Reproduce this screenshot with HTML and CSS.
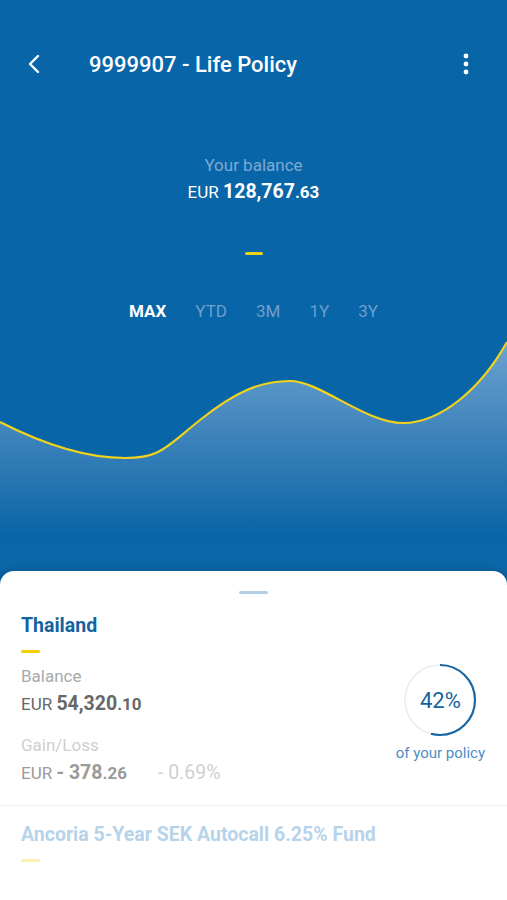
FILE: index.html
```html
<!DOCTYPE html>
<html>
<head>
<meta charset="utf-8">
<link rel="stylesheet" href="styles.css">
</head>
<body>
<div class="screen">
  <header class="topbar">
    <svg class="back" width="16" height="22" viewBox="0 0 16 22"><path d="M12 3 L4 11 L12 19" fill="none" stroke="#fff" stroke-width="2.4" stroke-linecap="round" stroke-linejoin="round"/></svg>
    <h1 class="title">9999907 - Life Policy</h1>
    <svg class="kebab" width="6" height="22" viewBox="0 0 6 22"><circle cx="3" cy="3" r="2.4" fill="#fff"/><circle cx="3" cy="11" r="2.4" fill="#fff"/><circle cx="3" cy="19" r="2.4" fill="#fff"/></svg>
  </header>
  <section class="balance">
    <div class="balance-label">Your balance</div>
    <div class="balance-amount"><span class="cur">EUR</span> <b>128,767</b><span class="dec">.63</span></div>
    <div class="dash"></div>
  </section>
  <nav class="tabs">
    <span class="tab active">MAX</span>
    <span class="tab">YTD</span>
    <span class="tab">3M</span>
    <span class="tab">1Y</span>
    <span class="tab">3Y</span>
  </nav>
  <svg class="chart" width="507" height="241" viewBox="0 0 507 241" preserveAspectRatio="none">
    <defs>
      <linearGradient id="fill" x1="0" y1="0" x2="0" y2="1">
        <stop offset="0" stop-color="#6aa3cf"/>
        <stop offset="0.3" stop-color="#4a8bc0"/>
        <stop offset="0.85" stop-color="#0a64a6"/>
        <stop offset="1" stop-color="#0d68a9"/>
      </linearGradient>
    </defs>
    <path d="M0,92 C45,115 85,128 125,128 C160,128 165,118 200,90 C235,62 260,51 290,51 C320,51 365,93 403,93 C440,93 480,60 507,12 L507,241 L0,241 Z" fill="url(#fill)"/>
    <path d="M0,92 C45,115 85,128 125,128 C160,128 165,118 200,90 C235,62 260,51 290,51 C320,51 365,93 403,93 C440,93 480,60 507,12" fill="none" stroke="#f2d31b" stroke-width="2.2"/>
  </svg>
  <main class="card">
    <div class="handle"></div>
    <div class="fund">
      <h2 class="fund-name">Thailand</h2>
      <div class="ybar"></div>
      <div class="fund-body">
        <div class="figures">
          <div class="label">Balance</div>
          <div class="value"><span class="cur">EUR</span> <b>54,320</b><span class="dec">.10</span></div>
          <div class="label light">Gain/Loss</div>
          <div class="value soft"><span class="cur">EUR</span> <b>- 378</b><span class="dec">.26</span><span class="pct">- 0.69%</span></div>
        </div>
        <div class="share">
          <div class="ring">
            <svg width="74" height="74" viewBox="0 0 74 74">
              <circle cx="37" cy="37" r="35" fill="none" stroke="#ececec" stroke-width="1.6"/>
              <circle cx="37" cy="37" r="35" fill="none" stroke="#1766a6" stroke-width="2.2" stroke-dasharray="119 220" transform="rotate(-90 37 37)"/>
            </svg>
            <span class="ring-text">42%</span>
          </div>
          <div class="share-label">of your policy</div>
        </div>
      </div>
    </div>
    <div class="fund next">
      <h2 class="fund-name">Ancoria 5-Year SEK Autocall 6.25% Fund</h2>
      <div class="ybar"></div>
    </div>
  </main>
</div>
</body>
</html>
```
FILE: styles.css
```css
* { box-sizing: border-box; }
html, body { margin: 0; padding: 0; }
body {
  font-family: Roboto, "Noto Sans", sans-serif;
  background: #0865a7;
  width: 507px;
  height: 900px;
  overflow: hidden;
}
.screen {
  display: flex;
  flex-direction: column;
  height: 900px;
}
.topbar {
  height: 128px;
  display: flex;
  align-items: center;
  padding: 0 38px 0 26px;
  color: #fff;
}
.back { display: block; }
.title {
  flex: 1;
  margin: 0 0 0 47px;
  font-size: 22px;
  font-weight: 500;
}
.kebab { display: block; }
.balance {
  display: flex;
  flex-direction: column;
  align-items: center;
  padding-top: 27px;
}
.balance-label {
  color: #7eaad4;
  font-size: 17px;
  line-height: 20px;
}
.balance-amount {
  margin-top: 7px;
  color: #fff;
  font-size: 17px;
  line-height: 20px;
}
.balance-amount b { font-size: 19.5px; font-weight: 700; }
.balance-amount .dec { font-weight: 700; font-size: 17px; }
.dash {
  margin-top: 50px;
  width: 18px;
  height: 3px;
  border-radius: 2px;
  background: #f2d31b;
}
.tabs {
  display: flex;
  justify-content: center;
  margin-top: 45px;
  height: 22px;
  align-items: center;
  font-size: 17px;
  color: #6f9fcf;
}
.tab { margin: 0 14.5px; }
.tab.active { color: #fff; font-weight: 700; }
.chart { display: block; margin-top: 8px; flex: none; }
.card {
  flex: 1;
  background: #fff;
  border-radius: 14px 14px 0 0;
  box-shadow: 0 -2px 6px rgba(0, 40, 80, 0.25);
  display: flex;
  flex-direction: column;
}
.handle {
  align-self: center;
  margin-top: 20px;
  width: 29px;
  height: 3px;
  border-radius: 2px;
  background: #b2cfe7;
}
.fund {
  padding: 0 21px;
}
.fund-name {
  margin: 20px 0 0;
  font-size: 19.5px;
  line-height: 24px;
  font-weight: 700;
  color: #1463a1;
}
.ybar {
  margin-top: 12px;
  width: 19px;
  height: 3px;
  border-radius: 2px;
  background: #f5cf00;
}
.fund-body {
  display: flex;
  justify-content: space-between;
  align-items: flex-start;
  padding-bottom: 21px;
  border-bottom: 1px solid #efefef;
  margin: 0 -21px;
  padding-left: 21px;
  padding-right: 22px;
}
.label {
  margin-top: 13px;
  font-size: 17px;
  line-height: 20px;
  color: #a9a9a9;
}
.label.light { margin-top: 20px; color: #cfcfcf; }
.value {
  margin-top: 7px;
  font-size: 17px;
  line-height: 22px;
  color: #676767;
}
.value b { font-size: 19.5px; font-weight: 700; }
.value .dec { font-weight: 700; }
.value.soft { color: #9a9a9a; }
.pct { margin-left: 31px; font-size: 19.5px; color: #d0d0d0; }
.share {
  display: flex;
  flex-direction: column;
  align-items: center;
  margin-top: 10px;
}
.ring {
  position: relative;
  width: 74px;
  height: 74px;
}
.ring svg { display: block; }
.ring-text {
  position: absolute;
  inset: 0;
  display: flex;
  align-items: center;
  justify-content: center;
  font-size: 22px;
  color: #1463a1;
}
.share-label {
  margin-top: 8px;
  font-size: 15px;
  line-height: 17px;
  color: #4f8cc4;
}
.fund.next .fund-name { margin-top: 17px; color: #b7d3ea; }
.fund.next .ybar { margin-top: 12px; background: #fcefb2; }
```
